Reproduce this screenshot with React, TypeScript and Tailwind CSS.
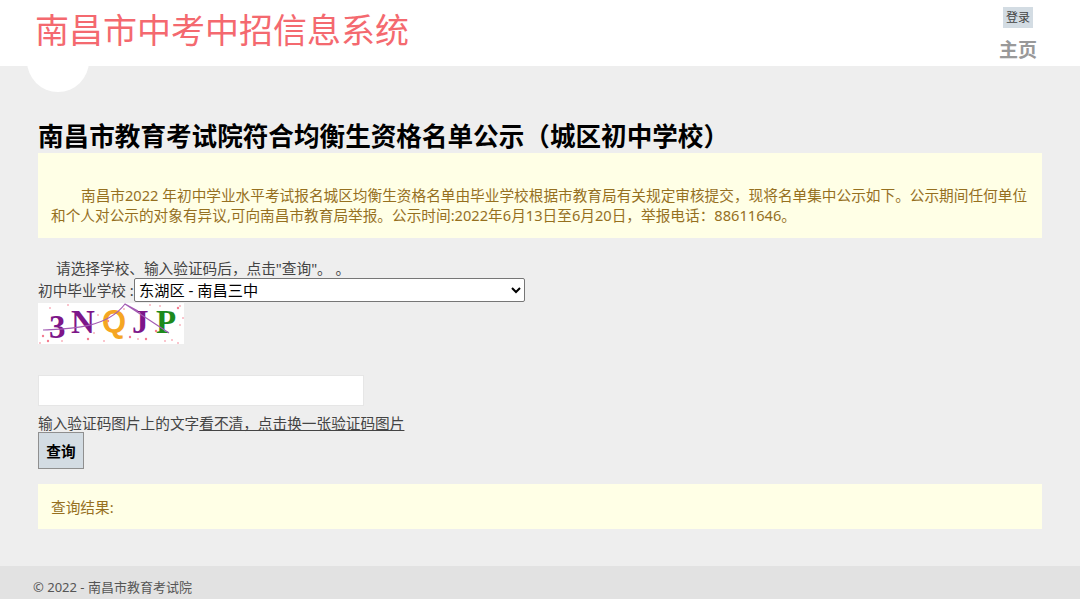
const font = "font-['Noto_Sans','Noto_Sans_CJK_SC',sans-serif]";

const dots = [
  [5, 33], [12, 5], [30, 2], [48, 20], [56, 30], [66, 38], [72, 27], [78, 33], [86, 6], [92, 34], [100, 36],
  [112, 2], [118, 28], [127, 38], [135, 10], [140, 5], [145, 15], [142, 22], [10, 38], [2, 40], [60, 12],
  [70, 18], [140, 40], [134, 37], [108, 36], [142, 3], [122, 3], [50, 36], [24, 38],
];

function Captcha() {
  return (
    <svg width="146" height="41" viewBox="0 0 146 41" className="block">
      <rect width="146" height="41" fill="#ffffff" />
      {dots.map(([x, y], i) => (
        <circle key={i} cx={x} cy={y} r={i % 3 === 0 ? 1.2 : 0.8} fill="#f0506a" opacity="0.75" />
      ))}
      <text x="11" y="35" fontFamily="Liberation Serif" fontWeight="bold" fontSize="33" fill="#7d1689">3</text>
      <text x="33" y="30" fontFamily="Liberation Serif" fontWeight="bold" fontSize="33" fill="#7d1689">N</text>
      <text x="64" y="29" fontFamily="Liberation Sans" fontWeight="bold" fontSize="31" fill="#f5a623">Q</text>
      <text x="94" y="30" fontFamily="Liberation Serif" fontWeight="bold" fontSize="33" fill="#7d1689">J</text>
      <text x="118" y="30" fontFamily="Liberation Serif" fontWeight="bold" fontSize="33" fill="#1d8a1d">P</text>
      <path d="M5 27 C30 26 68 26 87 1 L131 30 M87 1 L100 8" stroke="#a35cb4" strokeWidth="1.2" fill="none" />
    </svg>
  );
}

export default function App() {
  return (
    <div className={`relative flex h-[599px] w-[1080px] flex-col overflow-hidden bg-[#eeeeee] text-[14.67px] leading-[20px] text-[#444444] ${font}`}>
      <div className="absolute left-[27px] top-[30px] h-[62px] w-[62px] rounded-full bg-white" />

      {/* Header */}
      <header className="relative flex h-[66px] shrink-0 items-start justify-between bg-white pl-[35px] pr-[42px]">
        <div className="mt-[9px] text-[34px] leading-[42px] text-[#f4696f]">南昌市中考中招信息系统</div>
        <div className="mr-[1px] flex flex-col items-center pt-[7px]">
          <a className="bg-[#d3dce3] px-[3px] text-[12px] leading-[21px] text-[#444444]">登录</a>
          <a className="mt-[8px] text-[19px] font-bold leading-[28px] text-[#999999]">主页</a>
        </div>
      </header>

      {/* Main */}
      <main className="relative flex-1 px-[38px] pt-[55px]">
        <h1 className="text-[25.6px] font-bold leading-[32px] text-black">南昌市教育考试院符合均衡生资格名单公示（城区初中学校）</h1>
        <div className="bg-[#ffffe6] px-[13px] pb-[13px] pt-[32px] text-[#96701f]">
          <p className="indent-[30px]">
            南昌市2022 年初中学业水平考试报名城区均衡生资格名单由毕业学校根据市教育局有关规定审核提交，现将名单集中公示如下。公示期间任何单位和个人对公示的对象有异议,可向南昌市教育局举报。公示时间:2022年6月13日至6月20日，举报电话：88611646。
          </p>
        </div>

        <p className="mt-[20px] h-[20px] pl-[18px]">请选择学校、输入验证码后，点击"查询"。 。</p>
        <div className="flex h-[24px] items-center">
          <label htmlFor="school" className="w-[96px] whitespace-pre">初中毕业学校 : </label>
          <select
            id="school"
            defaultValue="nc3"
            className={`h-[24px] w-[391px] rounded-[2px] border border-[#767676] bg-white text-[15.2px] text-black ${font}`}
          >
            <option value="nc3">东湖区 - 南昌三中</option>
          </select>
        </div>
        <div className="mt-[1px]">
          <Captcha />
        </div>

        <input
          type="text"
          className="mt-[31px] block h-[31px] w-[326px] border border-[#e6e6e6] bg-white"
        />
        <div className="mt-[7px] h-[19px] leading-[20px]">
          输入验证码图片上的文字<a className="underline">看不清，点击换一张验证码图片</a>
        </div>
        <button className="block h-[37px] w-[46px] border border-[#8f8f8f] bg-[#d3dce3] text-[14.67px] font-bold text-black">
          查询
        </button>

        <div className="mt-[15px] flex h-[45px] items-center bg-[#ffffe6] px-[13px] text-[#96701f]">查询结果:</div>
      </main>

      {/* Footer */}
      <footer className="flex h-[33px] shrink-0 items-center bg-[#e2e2e2] pl-[33px] pt-[9px] text-[13px] text-[#555555]">
        © 2022 - 南昌市教育考试院
      </footer>
    </div>
  );
}
